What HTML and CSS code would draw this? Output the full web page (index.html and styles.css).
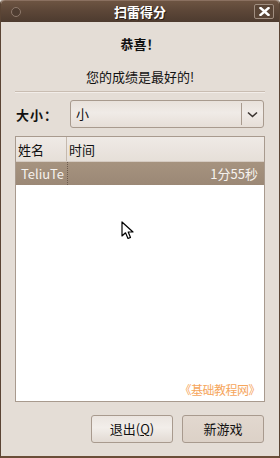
FILE: index.html
```html
<!DOCTYPE html>
<html lang="zh">
<head>
<meta charset="utf-8">
<title>扫雷得分</title>
<link rel="stylesheet" href="styles.css">
</head>
<body>
<div class="window">
  <div class="titlebar">
    <span class="dot"></span>
    <span class="title">扫雷得分</span>
    <span class="close">
      <svg width="11" height="9" viewBox="0 0 11 9"><path d="M1.5 1 L9.5 8 M9.5 1 L1.5 8" stroke="#fff" stroke-width="2.4" stroke-linecap="square"/></svg>
    </span>
  </div>
  <div class="content">
    <div class="congrats">恭喜！</div>
    <div class="msg">您的成绩是最好的!</div>
    <div class="sep"></div>
    <div class="size-row">
      <span class="size-label">大小：</span>
      <div class="combo">
        <span class="combo-text">小</span>
        <span class="combo-arrow">
          <svg width="11" height="7" viewBox="0 0 11 7"><path d="M1 1.5 L5.5 5.5 L10 1.5" fill="none" stroke="#3a3430" stroke-width="1.6"/></svg>
        </span>
      </div>
    </div>
    <div class="list">
      <div class="list-header">
        <span class="col-name">姓名</span>
        <span class="col-time">时间</span>
      </div>
      <div class="list-row selected">
        <span class="cell-name">TeliuTe</span>
        <span class="cell-time">1分55秒</span>
      </div>
      <div class="list-body">
        <svg class="cursor" width="14" height="20" viewBox="0 0 14 20"><path d="M1 1 L1 15 L4.5 11.8 L7 17.5 L9.5 16.4 L7.2 11 L12 11 Z" fill="#fff" stroke="#000" stroke-width="1.2" stroke-linejoin="round"/></svg>
        <div class="watermark">《基础教程网》</div>
      </div>
    </div>
    <div class="buttons">
      <button class="btn">退出(<span class="ul">Q</span>)</button>
      <button class="btn btn-default">新游戏</button>
    </div>
  </div>
</div>
</body>
</html>
```
FILE: styles.css
```css
* { box-sizing: border-box; }
html, body { margin: 0; padding: 0; }
body {
  width: 280px;
  height: 458px;
  overflow: hidden;
  font-family: "Noto Sans CJK SC", "DejaVu Sans", sans-serif;
  font-size: 13px;
  color: #111;
  background: #e4ddd6;
}
.window {
  width: 280px;
  height: 458px;
  display: flex;
  flex-direction: column;
  border-left: 1px solid #5a4434;
  border-right: 1px solid #5a4434;
  border-bottom: 2px solid #6a4e38;
  border-radius: 4px 4px 0 0;
  background: #e4ddd6;
}
.titlebar {
  height: 22px;
  flex: none;
  display: flex;
  align-items: center;
  position: relative;
  background: linear-gradient(#6d5442 0%, #5d4738 45%, #4d3b2f 100%);
  border-radius: 4px 4px 0 0;
  border-top: 1px solid #8a7060;
}
.dot {
  position: absolute;
  left: 10px;
  top: 6px;
  width: 10px;
  height: 10px;
  border-radius: 50%;
  border: 1px solid #8f7a6c;
  background: #4f3d31;
}
.title {
  flex: 1;
  text-align: center;
  color: #fff;
  font-weight: bold;
  font-size: 13px;
  line-height: 20px;
  text-shadow: 1px 1px 0 #2a1e16;
}
.close {
  position: absolute;
  right: 5px;
  top: 3px;
  width: 20px;
  height: 15px;
  border: 1px solid #a08e80;
  border-radius: 2px;
  background: #5a4536;
  display: flex;
  align-items: center;
  justify-content: center;
}
.content {
  flex: 1;
  display: flex;
  flex-direction: column;
  padding: 0 14px 0 14px;
}
.congrats {
  margin-top: 14px;
  text-align: center;
  font-weight: bold;
  line-height: 16px;
}
.msg {
  margin-top: 17px;
  text-align: center;
  line-height: 16px;
}
.sep {
  margin-top: 6px;
  background: #c9bdb2;
  border-bottom: 1px solid #f2ede9;
  height: 2px;
}
.size-row {
  margin-top: 7px;
  display: flex;
  align-items: center;
  height: 28px;
}
.size-label {
  width: 55px;
  font-weight: bold;
  padding-left: 1px;
  letter-spacing: 1px;
}
.combo {
  flex: 1;
  height: 28px;
  margin-right: 1px;
  display: flex;
  align-items: center;
  border: 1px solid #a89a8e;
  border-radius: 3px;
  background: linear-gradient(#e8e1db 0%, #f0ebe7 45%, #e6ded7 100%);
}
.combo-text {
  flex: 1;
  padding-left: 5px;
  line-height: 16px;
}
.combo-arrow {
  width: 22px;
  height: 22px;
  border-left: 1px solid #a89a8e;
  display: flex;
  align-items: center;
  justify-content: center;
}
.list {
  margin-top: 8px;
  height: 266px;
  display: flex;
  flex-direction: column;
  border: 1px solid #a89a8e;
  background: #fff;
}
.list-header {
  height: 25px;
  flex: none;
  display: flex;
  align-items: center;
  background: linear-gradient(#efeae6 0%, #e6dfd8 100%);
  border-bottom: 1px solid #d5cbc2;
}
.col-name {
  width: 51px;
  padding-left: 2px;
  height: 100%;
  display: flex;
  align-items: center;
  border-right: 1px solid #c5b9ae;
}
.col-time {
  padding-left: 2px;
}
.list-row {
  height: 23px;
  flex: none;
  display: flex;
  align-items: center;
  justify-content: space-between;
  padding: 0 6px 0 5px;
  position: relative;
}
.list-row.selected {
  background: linear-gradient(#a6937f 0%, #9b8876 100%);
  color: #f6f2ee;
}
.list-row.selected::before {
  content: "";
  position: absolute;
  left: 51px;
  top: 0;
  bottom: 0;
  border-left: 1px dotted #6d5c4e;
}
.list-body {
  flex: 1;
  position: relative;
}
.cursor {
  position: absolute;
  left: 105px;
  top: 36px;
}
.watermark {
  position: absolute;
  right: 4px;
  bottom: 4px;
  color: #f6a65c;
  font-size: 12px;
  letter-spacing: -0.5px;
  line-height: 14px;
}
.buttons {
  margin-top: 13px;
  display: flex;
  justify-content: flex-end;
  gap: 9px;
  padding-right: 1px;
}
.btn {
  width: 82px;
  height: 28px;
  font-family: "Noto Sans CJK SC", "DejaVu Sans", sans-serif;
  font-size: 13px;
  color: #111;
  border: 1px solid #a89a8e;
  border-radius: 3px;
  background: linear-gradient(#ebe5e0 0%, #f2eeea 45%, #e2dad3 100%);
  padding: 0;
  line-height: 16px;
}
.btn-default {
  background: linear-gradient(#e2d8cf 0%, #dcd1c7 100%);
}
.ul {
  text-decoration: underline;
}
```
